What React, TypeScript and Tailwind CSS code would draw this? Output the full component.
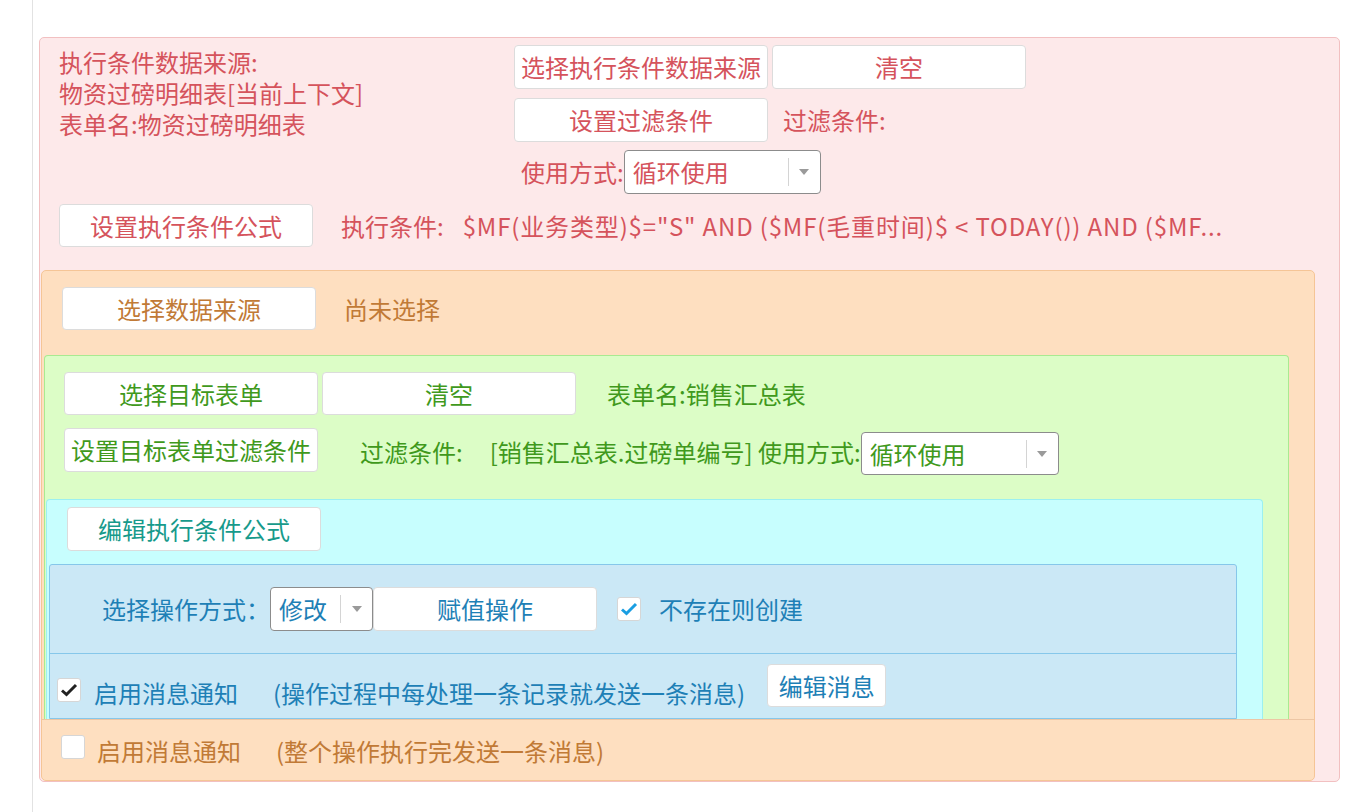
import type { ReactNode } from "react";

const Btn = ({ children, className = "" }: { children: ReactNode; className?: string }) => (
  <button
    className={`flex shrink-0 items-center justify-center whitespace-nowrap rounded-[4px] border border-[#dcdcdc] bg-white ${className}`}
  >
    {children}
  </button>
);

const Caret = () => (
  <svg width="10" height="6" viewBox="0 0 10 6">
    <path d="M0 0h10L5 6z" fill="#9a9a9a" />
  </svg>
);

const Select = ({ value, className = "" }: { value: string; className?: string }) => (
  <div className={`flex shrink-0 items-center rounded-[4px] border border-[#8c8c8c] bg-white ${className}`}>
    <span className="flex-1 whitespace-nowrap pl-[8px]">{value}</span>
    <span className="h-[28px] w-px bg-[#d4d4d4]" />
    <span className="flex w-[31px] justify-center">
      <Caret />
    </span>
  </div>
);

const Check = ({ checked, color, className = "" }: { checked?: boolean; color?: string; className?: string }) => (
  <span
    className={`flex h-[24px] w-[24px] shrink-0 items-center justify-center rounded-[3px] border border-[#d6d6d6] bg-white ${className}`}
  >
    {checked && (
      <svg width="18" height="14" viewBox="0 0 18 14">
        <path d="M2 7.5l4.5 4L16 2" fill="none" stroke={color} strokeWidth="3" />
      </svg>
    )}
  </span>
);

export default function App() {
  return (
    <div
      className="min-h-[812px] bg-white pl-[32px] text-[24px]"
      style={{ fontFamily: '"Noto Sans CJK SC", "Noto Sans", sans-serif' }}
    >
      <div className="min-h-[812px] border-l border-[#e2e2e2] pl-[6px] pt-[37px]">
        {/* 执行条件 */}
        <div className="w-[1301px] overflow-hidden rounded-[5px] border border-[#f2c0c1] bg-[#fde9ea] text-[#d5535c]">
          <div className="flex pl-[19px] pt-[7px]">
            <div className="flex w-[455px] shrink-0 flex-col pt-[1px]">
              <div className="h-[31px] leading-[31px]">执行条件数据来源:</div>
              <div className="h-[31px] leading-[31px]">物资过磅明细表[当前上下文]</div>
              <div className="h-[31px] leading-[31px]">表单名:物资过磅明细表</div>
            </div>
            <div className="flex flex-col">
              <div className="flex gap-[4px]">
                <Btn className="h-[44px] w-[254px]">选择执行条件数据来源</Btn>
                <Btn className="h-[44px] w-[254px]">清空</Btn>
              </div>
              <div className="mt-[9px] flex items-center">
                <Btn className="h-[44px] w-[254px]">设置过滤条件</Btn>
                <span className="ml-[15px]">过滤条件:</span>
              </div>
              <div className="mt-[8px] flex items-center">
                <span className="whitespace-nowrap pl-[7px]">使用方式:</span>
                <Select value="循环使用" className="h-[44px] w-[197px]" />
              </div>
            </div>
          </div>
          <div className="mt-[10px] flex items-center pl-[19px]">
            <Btn className="h-[43px] w-[254px]">设置执行条件公式</Btn>
            <span className="ml-[28px] whitespace-nowrap">执行条件:</span>
            <span className="ml-[19px] whitespace-nowrap tracking-[0.85px]">
              $MF(业务类型)$="S" AND ($MF(毛重时间)$ &lt; TODAY()) AND ($MF...
            </span>
          </div>

          {/* 数据来源 */}
          <div className="ml-px mr-[24px] mt-[23px] rounded-[5px] border border-[#f5c596] bg-[#fedfc0] text-[#c17a36]">
            <div className="flex items-center pl-[20px] pt-[16px]">
              <Btn className="h-[43px] w-[254px]">选择数据来源</Btn>
              <span className="ml-[28px]">尚未选择</span>
            </div>

            {/* 目标表单 */}
            <div className="ml-[2px] mr-[25px] mt-[25px] rounded-t-[4px] border border-b-0 border-[#a9ea91] bg-[#dcfdc6] text-[#40991c]">
              <div className="flex items-center pl-[19px] pt-[16px]">
                <Btn className="h-[43px] w-[254px]">选择目标表单</Btn>
                <Btn className="ml-[4px] h-[43px] w-[254px]">清空</Btn>
                <span className="ml-[31px]">表单名:销售汇总表</span>
              </div>
              <div className="mt-[13px] flex items-start pl-[19px]">
                <Btn className="h-[44px] w-[254px]">设置目标表单过滤条件</Btn>
                <span className="ml-[42px] mt-[8px] leading-[31px]">过滤条件:</span>
                <span className="ml-[27px] mt-[8px] whitespace-nowrap leading-[31px]">
                  [销售汇总表.过磅单编号] 使用方式:
                </span>
                <Select value="循环使用" className="mt-[4px] h-[43px] w-[198px]" />
              </div>

              {/* 执行条件公式 */}
              <div className="ml-px mr-[25px] mt-[24px] rounded-t-[4px] border border-b-0 border-[#9cf0f0] bg-[#c7fefe] text-[#179a8b]">
                <div className="pl-[20px] pt-[7px]">
                  <Btn className="h-[44px] w-[254px]">编辑执行条件公式</Btn>
                </div>

                {/* 操作 */}
                <div className="ml-[2px] mr-[25px] mt-[13px] rounded-t-[3px] border border-[#86c7ea] bg-[#cbe8f6] text-[#1e80b6]">
                  <div className="flex h-[88px] items-center pl-[52px]">
                    <span className="w-[168px] whitespace-nowrap">选择操作方式：</span>
                    <Select value="修改" className="h-[44px] w-[103px]" />
                    <Btn className="h-[44px] w-[224px]">赋值操作</Btn>
                    <Check checked color="#1a9ee2" className="ml-[20px]" />
                    <span className="ml-[18px]">不存在则创建</span>
                  </div>
                  <div className="flex h-[65px] items-start border-t border-[#86c7ea] pl-[7px]">
                    <Check checked color="#222222" className="mt-[24px]" />
                    <span className="ml-[13px] mt-[23px] whitespace-nowrap leading-[31px]">启用消息通知</span>
                    <span className="ml-[35px] mt-[23px] whitespace-nowrap leading-[31px]">
                      (操作过程中每处理一条记录就发送一条消息)
                    </span>
                    <Btn className="ml-[22px] mt-[10px] h-[43px] w-[119px]">编辑消息</Btn>
                  </div>
                </div>
              </div>
            </div>

            <div className="flex h-[61px] items-start border-t border-[#edc6a4] pl-[19px]">
              <Check className="mt-[15px] h-[23px]" />
              <span className="ml-[12px] mt-[15px] whitespace-nowrap leading-[31px]">启用消息通知</span>
              <span className="ml-[35px] mt-[15px] whitespace-nowrap leading-[31px]">(整个操作执行完发送一条消息)</span>
            </div>
          </div>
        </div>
      </div>
    </div>
  );
}
